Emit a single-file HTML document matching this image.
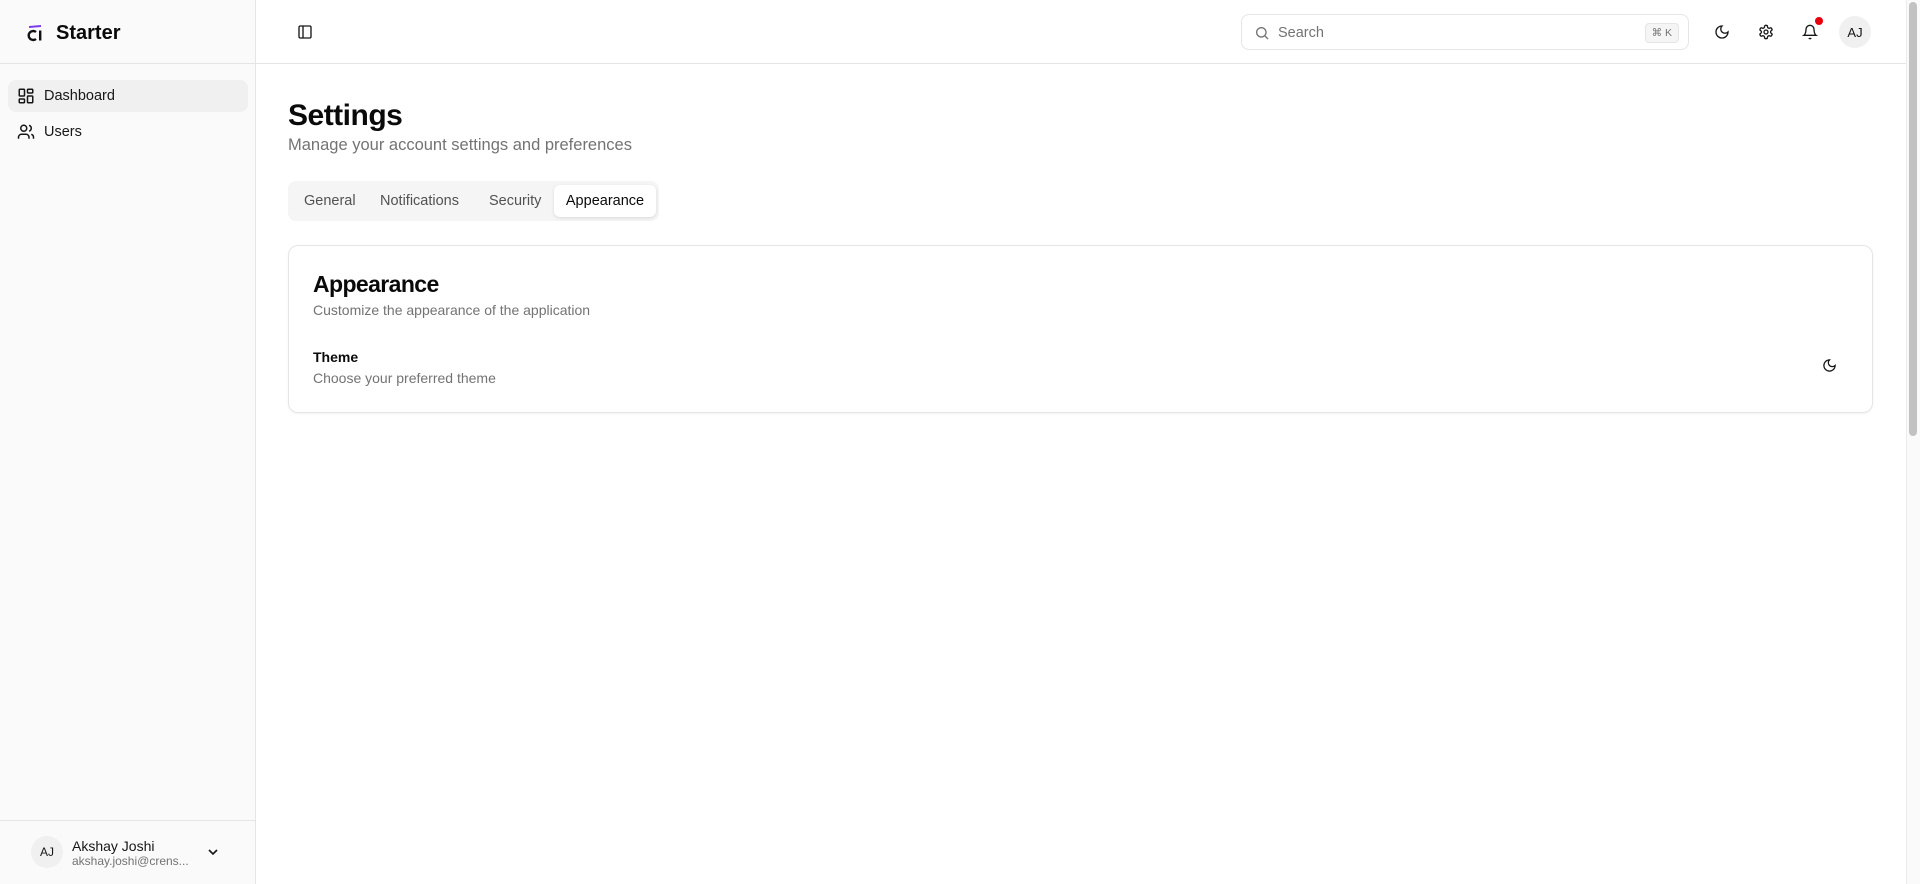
<!DOCTYPE html>
<html><head><meta charset="utf-8"><style>
*{box-sizing:border-box;margin:0;padding:0}
body{width:1920px;height:884px;overflow:hidden;font-family:"Liberation Sans",sans-serif;background:#fff;color:#0a0a0a;position:relative}
.side{position:absolute;left:0;top:0;width:256px;height:884px;background:#fafafa;border-right:1px solid #e5e5e5}
.logo{position:absolute;left:26px;top:19px;height:28px;display:flex;align-items:center;gap:12px;font-weight:700;font-size:20px}
.sb-line{position:absolute;left:0;right:0;height:1px;background:#e5e5e5}
.nav{position:absolute;left:8px;width:240px;height:32px;border-radius:8px;display:flex;align-items:center;gap:9px;padding-left:9px;font-size:14.5px;color:#171717}
.nav.active{background:#f0f0f0}
.foot{position:absolute;left:0;top:820px;width:256px;height:64px}
.av{border-radius:50%;background:#f0f0f0;display:flex;align-items:center;justify-content:center;font-size:13px;color:#171717}
.header{position:absolute;left:256px;top:0;right:14px;height:64px;border-bottom:1px solid #e5e5e5}
.search{position:absolute;left:985px;top:14px;width:448px;height:36px;border:1px solid #e5e5e5;border-radius:8px;display:flex;align-items:center;padding-left:12px;padding-top:2px;gap:8px;color:#737373;font-size:14.5px}
.kbd{position:absolute;right:9px;top:8px;height:20px;padding:0 6px;border:1px solid #e5e5e5;background:#f5f5f5;border-radius:4px;font-size:10.5px;color:#737373;display:flex;align-items:center}
.ic{position:absolute;top:24px}
.scroll{position:absolute;right:0;top:0;width:14px;height:884px;background:#fafafa;border-left:1px solid #ececec}
.thumb{position:absolute;right:3px;top:2px;width:8px;height:434px;border-radius:4px;background:#c2c2c2}
h1{position:absolute;left:288px;top:99px;font-size:30px;font-weight:700;letter-spacing:-0.5px}
.sub{position:absolute;left:288px;top:136px;font-size:16.5px;color:#737373}
.tabs{position:absolute;left:288px;top:181px;width:371px;height:40px;background:#f5f5f5;border-radius:8px}
.tab{position:absolute;top:4px;height:32px;display:flex;align-items:center;font-size:14.5px;color:#525252}
.tab.act{background:#fff;color:#0a0a0a;border-radius:6px;box-shadow:0 1px 3px rgba(0,0,0,.12);justify-content:center}
.card{position:absolute;left:288px;top:245px;width:1585px;height:168px;border:1px solid #e5e5e5;border-radius:10px;box-shadow:0 1px 2px rgba(0,0,0,.05)}
</style></head><body>
<div class="side">
  <div class="logo">
    <svg width="18" height="18" viewBox="0 0 18 18"><path d="M3 2 L15 1 L15 3 L3 4Z" fill="#7c3aed"/><path d="M10 8 A4.5 4.5 0 1 0 10 15" stroke="#111" stroke-width="2.4" fill="none"/><rect x="13" y="6.5" width="2.4" height="10" fill="#111"/></svg>
    <span>Starter</span>
  </div>
  <div class="sb-line" style="top:63px"></div>
  <div class="nav active" style="top:80px">
    <svg width="18" height="18" viewBox="0 0 24 24" fill="none" stroke="#171717" stroke-width="2"><rect x="3" y="3" width="7" height="9" rx="1"/><rect x="14" y="3" width="7" height="5" rx="1"/><rect x="14" y="12" width="7" height="9" rx="1"/><rect x="3" y="16" width="7" height="5" rx="1"/></svg>
    <span>Dashboard</span></div>
  <div class="nav" style="top:116px">
    <svg width="18" height="18" viewBox="0 0 24 24" fill="none" stroke="#171717" stroke-width="2"><path d="M16 21v-2a4 4 0 0 0-4-4H6a4 4 0 0 0-4 4v2"/><circle cx="9" cy="7" r="4"/><path d="M22 21v-2a4 4 0 0 0-3-3.87"/><path d="M16 3.13a4 4 0 0 1 0 7.75"/></svg>
    <span>Users</span></div>
  <div class="sb-line" style="top:820px"></div>
  <div class="foot">
    <div class="av" style="position:absolute;left:31px;top:16px;width:32px;height:32px;font-size:12px">AJ</div>
    <div style="position:absolute;left:72px;top:18px;font-size:14px;color:#171717;font-weight:500">Akshay Joshi</div>
    <div style="position:absolute;left:72px;top:34px;font-size:12px;color:#737373">akshay.joshi@crens...</div>
    <svg style="position:absolute;left:205px;top:24px" width="16" height="16" viewBox="0 0 24 24" fill="none" stroke="#171717" stroke-width="2.5"><path d="M6 9l6 6 6-6"/></svg>
  </div>
</div>
<div class="header">
  <svg style="position:absolute;left:41px;top:24px" width="16" height="16" viewBox="0 0 24 24" fill="none" stroke="#171717" stroke-width="2"><rect x="3" y="3" width="18" height="18" rx="2"/><path d="M9 3v18"/></svg>
  <div class="search">
    <svg width="16" height="16" viewBox="0 0 24 24" fill="none" stroke="#737373" stroke-width="2"><circle cx="11" cy="11" r="7"/><path d="M21 21l-4.3-4.3"/></svg>
    <span>Search</span><div class="kbd">⌘ K</div>
  </div>
  <svg class="ic" style="left:1458px" width="16" height="16" viewBox="0 0 24 24" fill="none" stroke="#171717" stroke-width="2"><path d="M12 3a6 6 0 0 0 9 9 9 9 0 1 1-9-9Z"/></svg>
  <svg class="ic" style="left:1502px" width="16" height="16" viewBox="0 0 24 24" fill="none" stroke="#171717" stroke-width="2"><path d="M12.22 2h-.44a2 2 0 0 0-2 2v.18a2 2 0 0 1-1 1.73l-.43.25a2 2 0 0 1-2 0l-.15-.08a2 2 0 0 0-2.730.73l-.22.38a2 2 0 0 0 .73 2.73l.15.1a2 2 0 0 1 1 1.72v.51a2 2 0 0 1-1 1.74l-.15.09a2 2 0 0 0-.73 2.73l.22.38a2 2 0 0 0 2.73.73l.15-.08a2 2 0 0 1 2 0l.43.25a2 2 0 0 1 1 1.73V20a2 2 0 0 0 2 2h.44a2 2 0 0 0 2-2v-.18a2 2 0 0 1 1-1.73l.43-.25a2 2 0 0 1 2 0l.15.08a2 2 0 0 0 2.73-.73l.22-.39a2 2 0 0 0-.73-2.73l-.15-.08a2 2 0 0 1-1-1.74v-.5a2 2 0 0 1 1-1.74l.15-.09a2 2 0 0 0 .73-2.73l-.22-.38a2 2 0 0 0-2.73-.73l-.15.08a2 2 0 0 1-2 0l-.43-.25a2 2 0 0 1-1-1.73V4a2 2 0 0 0-2-2z"/><circle cx="12" cy="12" r="3"/></svg>
  <svg class="ic" style="left:1546px" width="16" height="16" viewBox="0 0 24 24" fill="none" stroke="#171717" stroke-width="2"><path d="M6 8a6 6 0 0 1 12 0c0 7 3 9 3 9H3s3-2 3-9"/><path d="M10.3 21a1.94 1.94 0 0 0 3.4 0"/></svg>
  <div style="position:absolute;left:1559px;top:17px;width:8px;height:8px;border-radius:50%;background:#e7000b"></div>
  <div class="av" style="position:absolute;left:1583px;top:16px;width:32px;height:32px">AJ</div>
</div>
<div class="scroll"><div class="thumb"></div></div>
<h1>Settings</h1>
<div class="sub">Manage your account settings and preferences</div>
<div class="tabs">
  <div class="tab" style="left:16px">General</div>
  <div class="tab" style="left:92px">Notifications</div>
  <div class="tab" style="left:201px">Security</div>
  <div class="tab act" style="left:266px;width:102px">Appearance</div>
</div>
<div class="card">
  <div style="position:absolute;left:24px;top:25px;font-size:23px;font-weight:700;letter-spacing:-0.6px">Appearance</div>
  <div style="position:absolute;left:24px;top:56px;font-size:14px;color:#737373">Customize the appearance of the application</div>
  <div style="position:absolute;left:24px;top:103px;font-size:14px;font-weight:600;color:#0a0a0a">Theme</div>
  <div style="position:absolute;left:24px;top:124px;font-size:14px;color:#737373">Choose your preferred theme</div>
  <svg style="position:absolute;left:1533px;top:112px" width="15" height="15" viewBox="0 0 24 24" fill="none" stroke="#171717" stroke-width="2"><path d="M12 3a6 6 0 0 0 9 9 9 9 0 1 1-9-9Z"/></svg>
</div>
</body></html>
